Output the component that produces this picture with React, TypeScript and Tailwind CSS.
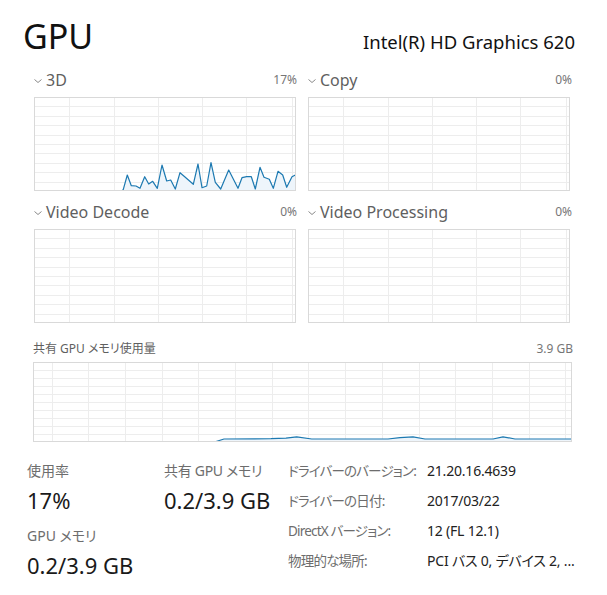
import React from 'react';

const font = "font-['Noto_Sans','Noto_Sans_CJK_JP',sans-serif] [font-feature-settings:'palt']";

type Pt = [number, number];

const smallGrid = [35, 80, 124, 168, 212, 258];
const bigGrid = Array.from({ length: 15 }, (_, i) => 18.5 + i * 36.7);

const load3d: Pt[] = [
	[88.5, 94], [89.3, 92.3], [93.3, 78], [97.3, 88.7], [102, 89], [106, 91.3], [110.7, 79.7], [114.7, 87],
	[118.7, 84.3], [123.3, 91.3], [128, 68], [132.7, 84], [136.7, 83], [141.3, 92], [146, 75.7], [150.7, 79.7],
	[159.3, 87.3], [164, 67], [168, 90.7], [172.7, 89], [177, 65.7], [181.3, 85.3], [186.7, 92], [194.7, 73],
	[204, 91.3], [208, 80.7], [212.7, 79.7], [217.3, 79.7], [221.3, 92], [226, 70.3], [230, 80.3], [235.3, 82.3],
	[239.3, 91.3], [244, 74.3], [248.7, 78], [252.7, 90.3], [258, 79.7], [261.3, 78],
];

const sharedMem: Pt[] = [
	[182, 80], [183, 79.5], [191, 77], [238, 76.7], [253, 76.2], [263.7, 74.8], [278.7, 77], [355, 77],
	[367, 75.6], [380, 74.8], [392, 77], [460, 77], [470, 74.8], [482, 77], [539, 77],
];

function Chart({ w, h, vx, line }: { w: number; h: number; vx: number[]; line?: Pt[] }) {
	const rows = Array.from({ length: 9 }, (_, i) => Math.round(((i + 1) * h) / 10) + 0.5);
	const pts = line?.map(([x, y]) => `${x},${y}`).join(' ');
	return (
		<svg width={w} height={h} className="block">
			{rows.map((y) => (
				<line key={'h' + y} x1={0} x2={w} y1={y} y2={y} stroke="#ededed" />
			))}
			{vx.map((x) => (
				<line key={'v' + x} x1={Math.round(x) + 0.5} x2={Math.round(x) + 0.5} y1={0} y2={h} stroke="#ededed" />
			))}
			{line && (
				<>
					<polygon points={`${line[0][0]},${h} ${pts} ${line[line.length - 1][0]},${h}`} fill="#eef5fb" />
					<polyline points={pts} fill="none" stroke="#1c79b1" strokeWidth={1.2} strokeLinejoin="round" />
				</>
			)}
			<rect x={0.5} y={0.5} width={w - 1} height={h - 1} fill="none" stroke="#d9d9d9" />
		</svg>
	);
}

function Chevron() {
	return (
		<svg width="10" height="6" viewBox="0 0 10 6" className="mr-[3px] mt-[1px]">
			<polyline points="1.5,1.5 5,4.5 8.5,1.5" fill="none" stroke="#8a8a8a" strokeWidth="1" />
		</svg>
	);
}

function Panel({ title, value, line }: { title: string; value: string; line?: Pt[] }) {
	return (
		<div className="flex flex-col">
			<div className="flex h-[20px] items-center justify-between">
				<div className="flex items-center">
					<Chevron />
					<span className="text-[16px] leading-[20px] text-[#5f5f5f]">{title}</span>
				</div>
				<span className="text-[12px] text-[#767676]">{value}</span>
			</div>
			<div className="mt-[7px] pl-px">
				<Chart w={262} h={94} vx={smallGrid} line={line} />
			</div>
		</div>
	);
}

const driver: [string, string][] = [
	['ドライバーのバージョン:', '21.20.16.4639'],
	['ドライバーの日付:', '2017/03/22'],
	['DirectX バージョン:', '12 (FL 12.1)'],
	['物理的な場所:', 'PCI バス 0, デバイス 2, ...'],
];

export default function App() {
	return (
		<div className={`${font} h-[595px] w-[607px] overflow-hidden bg-white text-[#1a1a1a]`}>
			<div className="flex h-[70px] items-baseline justify-between pl-[23px] pr-[32px] pt-[19px]">
				<span className="text-[34px] leading-none text-[#111]">GPU</span>
				<span className="text-[18.5px] leading-none text-[#111]">Intel(R) HD Graphics 620</span>
			</div>

			<div className="pl-[33px]">
				<div className="grid grid-cols-[264px_265px] gap-x-[10px] gap-y-[11px]">
					<Panel title="3D" value="17%" line={load3d} />
					<Panel title="Copy" value="0%" />
					<Panel title="Video Decode" value="0%" />
					<Panel title="Video Processing" value="0%" />
				</div>

				<div className="mt-[16px] flex h-[20px] w-[540px] items-center justify-between text-[12px] text-[#5f5f5f]">
					<span>共有 GPU メモリ使用量</span>
					<span className="text-[#767676]">3.9 GB</span>
				</div>
				<div className="mt-[3px]">
					<Chart w={539} h={80} vx={bigGrid} line={sharedMem} />
				</div>
			</div>

			<div className="mt-[17px] flex pl-[27px]">
				<div className="flex w-[137px] flex-col pt-[2px]">
					<span className="text-[14px] leading-[20px] text-[#6d6d6d]">使用率</span>
					<span className="mt-[5px] text-[22px] leading-[28px]">17%</span>
					<span className="mt-[12px] text-[14px] leading-[20px] text-[#6d6d6d]">GPU メモリ</span>
					<span className="mt-[5px] text-[22px] leading-[28px]">0.2/3.9 GB</span>
				</div>
				<div className="flex w-[124px] flex-col pt-[2px]">
					<span className="text-[14px] leading-[20px] tracking-[-0.3px] text-[#6d6d6d]">共有 GPU メモリ</span>
					<span className="mt-[5px] text-[22px] leading-[28px]">0.2/3.9 GB</span>
				</div>
				<div className="grid grid-cols-[139px_auto] leading-[24px]">
					{driver.map(([k, v]) => (
						<React.Fragment key={k}>
							<span className="whitespace-nowrap text-[13.5px] tracking-[-0.8px] text-[#6d6d6d]">{k}</span>
							<span className="whitespace-nowrap text-[14px] tracking-[-0.2px] text-[#222]">{v}</span>
						</React.Fragment>
					))}
				</div>
			</div>
		</div>
	);
}
